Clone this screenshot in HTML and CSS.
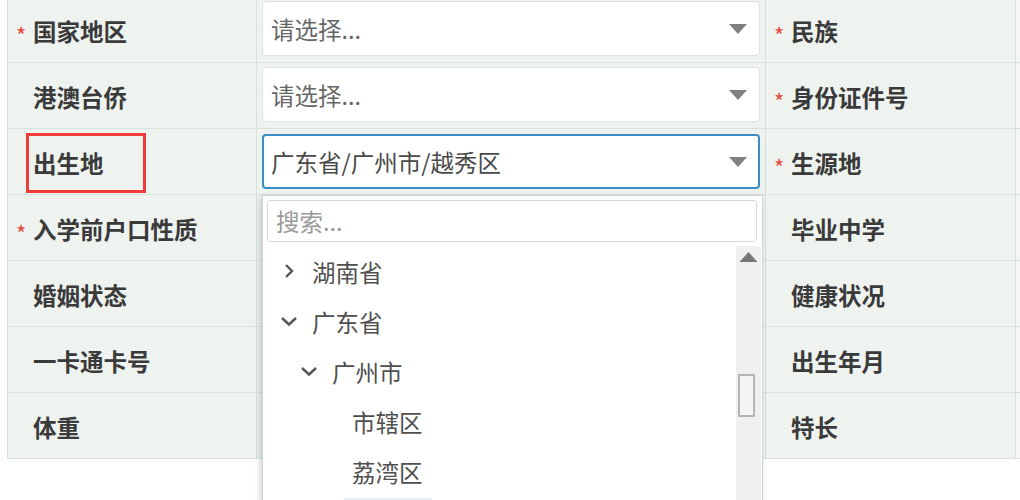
FILE: index.html
```html
<!DOCTYPE html>
<html lang="zh-CN">
<head>
<meta charset="utf-8">
<title>表单</title>
<link rel="stylesheet" href="styles.css">
</head>
<body>
<div class="form">
  <div class="cell label"><span class="star">*</span>国家地区</div>
  <div class="cell field"><div class="select"><span class="val placeholder">请选择...</span><span class="caret"></span></div></div>
  <div class="cell label"><span class="star">*</span>民族</div>
  <div class="cell"></div>

  <div class="cell label">港澳台侨</div>
  <div class="cell field"><div class="select"><span class="val placeholder">请选择...</span><span class="caret"></span></div></div>
  <div class="cell label"><span class="star">*</span>身份证件号</div>
  <div class="cell"></div>

  <div class="cell label">出生地<span class="mark"></span></div>
  <div class="cell field">
    <div class="select focused"><span class="val">广东省/广州市/越秀区</span><span class="caret"></span></div>
    <div class="dropdown">
      <div class="search">搜索...</div>
      <div class="tree-wrap">
        <ul class="tree">
          <li class="item lv0"><span class="chev"><svg width="20" height="20" viewBox="0 0 20 20"><polyline points="7,4 13,10 7,16" fill="none" stroke="#555" stroke-width="2.4"/></svg></span><span class="txt">湖南省</span></li>
          <li class="item lv0"><span class="chev"><svg width="20" height="20" viewBox="0 0 20 20"><polyline points="3,7 10,13.5 17,7" fill="none" stroke="#555" stroke-width="2.4"/></svg></span><span class="txt">广东省</span></li>
          <li class="item lv1"><span class="chev"><svg width="20" height="20" viewBox="0 0 20 20"><polyline points="3,7 10,13.5 17,7" fill="none" stroke="#555" stroke-width="2.4"/></svg></span><span class="txt">广州市</span></li>
          <li class="item lv2"><span class="chev"></span><span class="txt">市辖区</span></li>
          <li class="item lv2"><span class="chev"></span><span class="txt">荔湾区</span></li>
          <li class="item lv2 last"><span class="chev"></span><span class="txt active"></span></li>
        </ul>
        <div class="scrollbar">
          <svg class="up" width="25" height="16" viewBox="0 0 25 16"><polygon points="3.5,14 12.5,4 21.5,14" fill="#777"/></svg>
          <div class="thumb"></div>
        </div>
      </div>
    </div>
  </div>
  <div class="cell label"><span class="star">*</span>生源地</div>
  <div class="cell"></div>

  <div class="cell label"><span class="star">*</span>入学前户口性质</div>
  <div class="cell field"></div>
  <div class="cell label">毕业中学</div>
  <div class="cell"></div>

  <div class="cell label">婚姻状态</div>
  <div class="cell field"></div>
  <div class="cell label">健康状况</div>
  <div class="cell"></div>

  <div class="cell label">一卡通卡号</div>
  <div class="cell field"></div>
  <div class="cell label">出生年月</div>
  <div class="cell"></div>

  <div class="cell label">体重</div>
  <div class="cell field"></div>
  <div class="cell label">特长</div>
  <div class="cell"></div>
</div>
</body>
</html>
```

FILE: styles.css
```css
html, body {
  margin: 0;
  padding: 0;
  background: #ffffff;
  overflow: hidden;
}
body {
  width: 1020px;
  height: 500px;
  font-family: "Noto Sans CJK SC", "Noto Sans", sans-serif;
}
.form {
  display: grid;
  grid-template-columns: 249px 509px 250px 4px;
  grid-auto-rows: 66px;
  width: max-content;
  margin: -4px 0 0 7px;
  border-top: 1px solid #d5e3dc;
  border-left: 1px solid #d5e3dc;
}
.cell {
  box-sizing: border-box;
  position: relative;
  border-right: 1px solid #d5e3dc;
  border-bottom: 1px solid #d5e3dc;
  background: #eef3f0;
}
.cell:nth-child(4n) {
  border-right: 0;
  background: #f4f7f5;
}
.label {
  display: flex;
  align-items: center;
  padding: 3px 0 0 25px;
  font-size: 23.5px;
  font-weight: 700;
  color: #3a3a3a;
}
.star {
  position: absolute;
  left: 8px;
  top: 26px;
  font-size: 22px;
  line-height: 22px;
  font-weight: 400;
  color: #e5473d;
}
.mark {
  position: absolute;
  left: 18px;
  top: 4px;
  width: 120px;
  height: 60px;
  box-sizing: border-box;
  border: 3px solid #f23a3a;
}
.field {
  padding: 4px 5px 0 5px;
}
.select {
  box-sizing: border-box;
  height: 55px;
  display: flex;
  align-items: center;
  padding: 0 12px 0 8px;
  background: #ffffff;
  border: 1px solid #d9e4df;
  border-radius: 4px;
  font-size: 23.5px;
  color: #555;
}
.select.focused {
  border: 2px solid #3b8dc6;
  padding-left: 7px;
  padding-right: 11px;
  margin-top: 1px;
  color: #4a4a4a;
}
.val {
  flex: 1;
}
.placeholder {
  color: #666;
}
.caret {
  width: 0;
  height: 0;
  border-left: 9.5px solid transparent;
  border-right: 9.5px solid transparent;
  border-top: 10px solid #808080;
}
.dropdown {
  position: absolute;
  left: 5px;
  top: 66px;
  z-index: 10;
  width: 501px;
  height: 305px;
  overflow: hidden;
  box-sizing: border-box;
  background: #ffffff;
  border: 1px solid #cfd6d2;
  border-bottom: 0;
  box-shadow: -2px 3px 6px rgba(0, 0, 0, 0.18);
}
.search {
  box-sizing: border-box;
  height: 42px;
  margin: 4px 5px 4px 4px;
  padding: 0 0 0 8px;
  display: flex;
  align-items: center;
  border: 1px solid #d3ddd8;
  border-radius: 3px;
  font-size: 23.5px;
  color: #9a9a9a;
}
.tree-wrap {
  display: flex;
}
.tree {
  flex: 1;
  list-style: none;
  margin: 0;
  padding: 0;
}
.item {
  height: 50px;
  display: flex;
  align-items: center;
  padding-left: 16px;
  font-size: 23.5px;
  color: #4f4f4f;
}
.item.lv1 { padding-left: 36px; }
.item.lv2 { padding-left: 56px; }
.item.last { align-items: flex-start; }
.chev {
  width: 20px;
  height: 20px;
  display: flex;
}
.txt {
  margin-left: 5px;
  padding: 0 8px;
  height: 44px;
  line-height: 46px;
}
.txt.active {
  width: 72px;
  margin-top: 2px;
  background: #e2f0fa;
}
.scrollbar {
  position: relative;
  width: 25px;
  margin-right: 1px;
  height: 260px;
  background: #f0f0f0;
}
.up {
  display: block;
  margin-top: 2px;
}
.thumb {
  position: absolute;
  left: 2px;
  top: 128px;
  width: 17px;
  height: 43px;
  box-sizing: border-box;
  border: 2px solid #b5b5b5;
  background: #f5f5f5;
}
```
